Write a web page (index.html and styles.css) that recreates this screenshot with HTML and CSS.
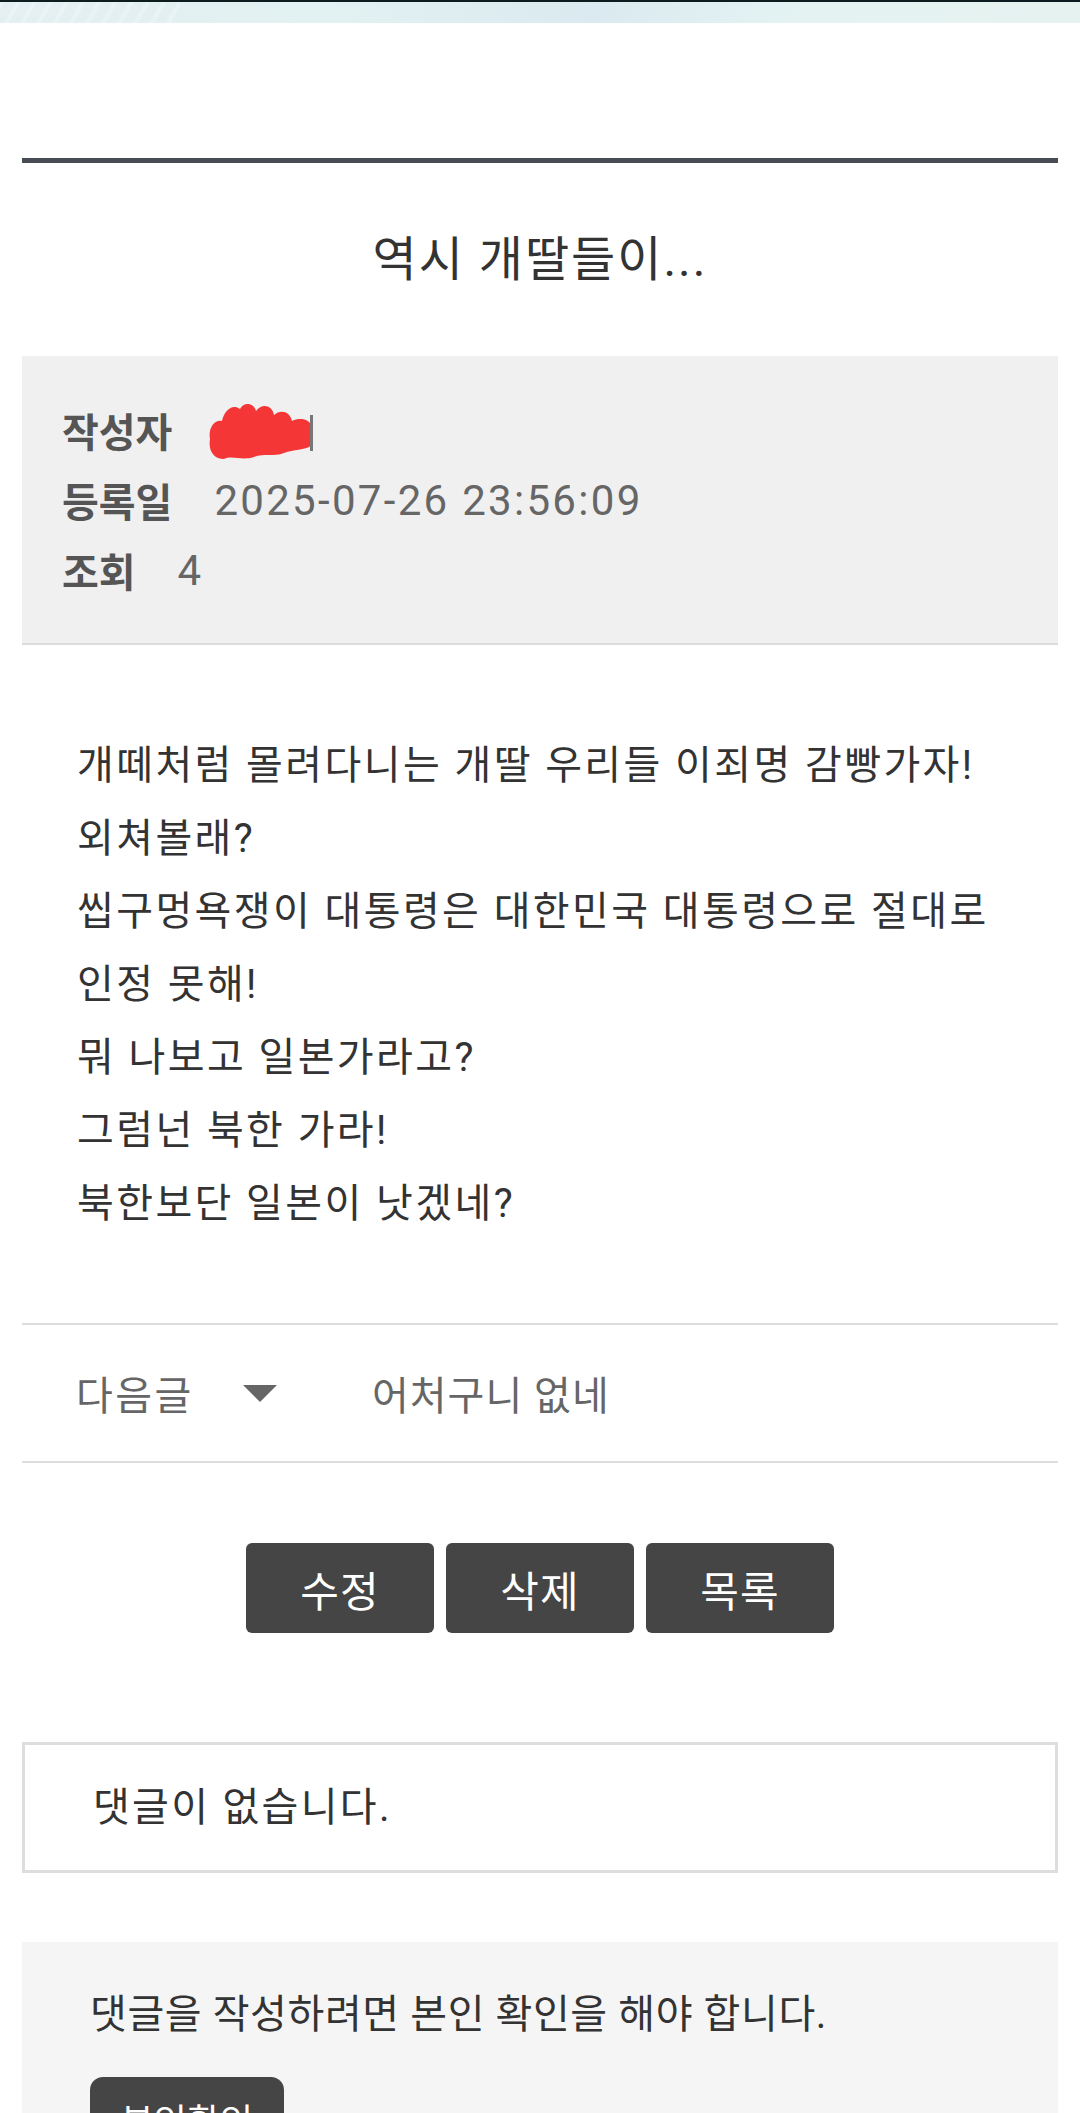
FILE: index.html
```html
<!DOCTYPE html>
<html lang="ko">
<head>
    <meta charset="UTF-8">
    <meta name="viewport" content="width=device-width, initial-scale=1.0">
    <title>역시 개딸들이...</title>
    <link rel="stylesheet" href="styles.css">
</head>
<body>
    <div class="top-banner"></div>

    <div class="wrap">
        <div class="post-head">
            <h1 class="post-title">역시 개딸들이...</h1>
        </div>

        <div class="post-info">
            <div class="info-row">
                <span class="info-label">작성자</span>
                <span class="info-value redacted">
                    <svg width="118" height="62" viewBox="0 0 118 62">
                        <path d="M6 40 C4 30 10 20 18 22 C20 12 28 4 36 10 C40 2 50 4 52 12 C58 4 68 6 70 16 C76 10 86 12 88 22 C96 18 106 20 108 28 L108 46 C100 52 90 50 80 54 C70 58 60 54 50 58 C38 62 28 56 20 60 C10 60 4 52 6 40 Z" fill="#f53636"/>
                        <rect x="106" y="16" width="3" height="36" fill="#777"/>
                    </svg>
                </span>
            </div>
            <div class="info-row">
                <span class="info-label">등록일</span>
                <span class="info-value num">2025-07-26 23:56:09</span>
            </div>
            <div class="info-row">
                <span class="info-label">조회</span>
                <span class="info-value num">4</span>
            </div>
        </div>

        <div class="post-body">
            <p>개떼처럼 몰려다니는 개딸 우리들 이죄명 감빵가자!</p>
            <p>외쳐볼래?</p>
            <p>씹구멍욕쟁이 대통령은 대한민국 대통령으로 절대로</p>
            <p>인정 못해!</p>
            <p>뭐 나보고 일본가라고?</p>
            <p>그럼넌 북한 가라!</p>
            <p>북한보단 일본이 낫겠네?</p>
        </div>

        <div class="post-nav">
            <span class="nav-label">다음글</span>
            <span class="nav-arrow"></span>
            <span class="nav-title">어처구니 없네</span>
        </div>

        <div class="buttons">
            <button class="btn">수정</button>
            <button class="btn">삭제</button>
            <button class="btn">목록</button>
        </div>

        <div class="comment-empty">댓글이 없습니다.</div>

        <div class="comment-auth">
            <p>댓글을 작성하려면 본인 확인을 해야 합니다.</p>
            <button class="btn-auth">본인확인</button>
        </div>
    </div>
</body>
</html>
```

FILE: styles.css
```css
body {
    margin: 0;
    font-family: Roboto, "Noto Sans CJK KR", sans-serif;
    color: #333;
    background: #fff;
    overflow: hidden;
}

/* 상단 배너 */
.top-banner {
    height: 21px;
    border-top: 2px solid #0c1c1f;
    background:
        repeating-linear-gradient(120deg, rgba(255, 255, 255, 0.25) 0 4px, rgba(255, 255, 255, 0) 4px 14px) left / 180px 100% no-repeat,
        linear-gradient(90deg, #e4eff2 0%, #e2f1f1 30%, #dbeaf0 55%, #e4f3f2 75%, #e6f2f0 100%);
}

.wrap {
    padding: 0 22px;
}

.post-head {
    margin-top: 135px;
    border-top: 5px solid #474c55;
    padding: 62px 0;
}

.post-title {
    margin: 0;
    font-size: 48px;
    font-weight: normal;
    line-height: 69px;
    letter-spacing: 2px;
    text-align: center;
    color: #333;
}

/* 작성 정보 */
.post-info {
    background: #f0f0f0;
    border-bottom: 2px solid #dcdcdc;
    padding: 39px 40px 38px;
}

.info-row {
    display: flex;
    align-items: center;
    height: 70px;
}

.info-label {
    font-size: 40px;
    font-weight: bold;
    color: #555;
    margin-right: 42px;
}

.info-value {
    font-size: 40px;
    color: #666;
}

.info-value.num {
    font-size: 42px;
    letter-spacing: 2.3px;
}

.redacted {
    display: flex;
    margin-left: -10px;
}

/* 본문 */
.post-body {
    padding: 84px 55px 83px;
    font-size: 40px;
    line-height: 73px;
    letter-spacing: 2.4px;
    color: #333;
}

.post-body p {
    margin: 0;
}

/* 다음글 */
.post-nav {
    display: flex;
    align-items: center;
    height: 136px;
    border-top: 2px solid #ddd;
    border-bottom: 2px solid #ddd;
    padding-left: 54px;
    font-size: 40px;
    color: #666;
}

.nav-label {
    width: 167px;
    letter-spacing: 2.5px;
}

.nav-arrow {
    width: 0;
    height: 0;
    border-left: 17px solid transparent;
    border-right: 17px solid transparent;
    border-top: 17px solid #666;
    margin-right: 95px;
}

.nav-title {
    letter-spacing: 1px;
}

/* 버튼 */
.buttons {
    display: flex;
    justify-content: center;
    gap: 12px;
    margin-top: 80px;
}

.btn {
    width: 188px;
    height: 90px;
    border: none;
    border-radius: 6px;
    background: #454545;
    color: #fff;
    font-family: inherit;
    font-size: 42px;
    letter-spacing: 1px;
    cursor: pointer;
}

/* 댓글 */
.comment-empty {
    margin-top: 109px;
    border: 3px solid #ddd;
    padding: 0 68px;
    height: 125px;
    line-height: 125px;
    font-size: 40px;
    letter-spacing: 2.3px;
    color: #333;
}

.comment-auth {
    margin-top: 69px;
    background: #f5f5f5;
    padding: 37px 68px 40px;
}

.comment-auth p {
    margin: 0;
    font-size: 40px;
    line-height: 72px;
    letter-spacing: 0.6px;
    color: #333;
}

.btn-auth {
    margin-top: 26px;
    width: 194px;
    height: 84px;
    border: none;
    border-radius: 13px;
    background: #454545;
    color: #fff;
    font-family: inherit;
    font-size: 36px;
    cursor: pointer;
}
```
